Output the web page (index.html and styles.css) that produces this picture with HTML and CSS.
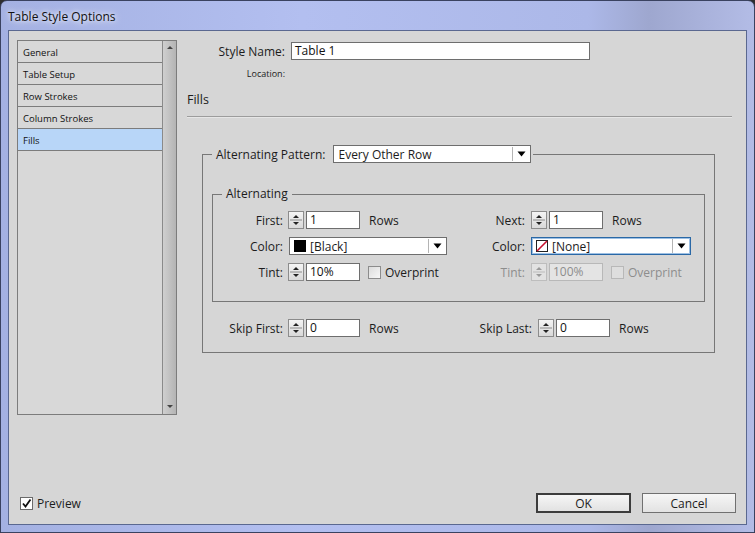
FILE: index.html
```html
<!DOCTYPE html>
<html lang="en">
<head>
    <meta charset="UTF-8">
    <title>Table Style Options</title>
    <link rel="stylesheet" href="styles.css">
</head>
<body>
    <div class="window">
        <div class="titlebar">Table Style Options</div>
        <div class="client">
            <div class="main">
                <div class="sidebar">
                    <ul class="nav">
                        <li>General</li>
                        <li>Table Setup</li>
                        <li>Row Strokes</li>
                        <li>Column Strokes</li>
                        <li class="selected">Fills</li>
                    </ul>
                    <div class="scrollbar">
                        <svg width="12" height="8" viewBox="0 0 12 8"><path d="M3 6 L6 3 L9 6 Z" fill="#444"/></svg>
                        <svg width="12" height="8" viewBox="0 0 12 8"><path d="M3 2 L9 2 L6 5 Z" fill="#444"/></svg>
                    </div>
                </div>

                <div class="content">
                    <div class="name-row">
                        <span class="name-label">Style Name:</span>
                        <div class="field name-input">Table 1</div>
                    </div>
                    <div class="location">Location:</div>
                    <div class="section-title">Fills</div>
                    <div class="rule"></div>

                    <fieldset class="group outer">
                        <legend class="pattern-legend">
                            <span>Alternating Pattern:</span>
                            <div class="select pattern-select">
                                <span class="select-text">Every Other Row</span>
                                <span class="select-arrow"><svg width="9" height="6" viewBox="0 0 9 6"><path d="M0.5 0.5 L8.5 0.5 L4.5 5.5 Z" fill="#000"/></svg></span>
                            </div>
                        </legend>

                        <fieldset class="group inner">
                            <legend class="inner-legend">Alternating</legend>
                            <div class="grid">
                                <span class="lbl">First:</span>
                                <div class="ctl">
                                    <span class="spin"><svg width="14" height="16" viewBox="0 0 14 16"><path d="M4 6 L10 6 L7 3 Z" fill="#222"/><path d="M1 8 L13 8" stroke="#8a8a8a"/><path d="M4 10 L10 10 L7 13 Z" fill="#222"/></svg></span>
                                    <div class="field num">1</div>
                                    <span class="unit">Rows</span>
                                </div>
                                <span class="lbl lbl-right">Next:</span>
                                <div class="ctl">
                                    <span class="spin"><svg width="14" height="16" viewBox="0 0 14 16"><path d="M4 6 L10 6 L7 3 Z" fill="#222"/><path d="M1 8 L13 8" stroke="#8a8a8a"/><path d="M4 10 L10 10 L7 13 Z" fill="#222"/></svg></span>
                                    <div class="field num">1</div>
                                    <span class="unit">Rows</span>
                                </div>

                                <span class="lbl">Color:</span>
                                <div class="ctl">
                                    <div class="select color-select">
                                        <span class="select-text"><span class="swatch black"></span>[Black]</span>
                                        <span class="select-arrow"><svg width="9" height="6" viewBox="0 0 9 6"><path d="M0.5 0.5 L8.5 0.5 L4.5 5.5 Z" fill="#000"/></svg></span>
                                    </div>
                                </div>
                                <span class="lbl lbl-right">Color:</span>
                                <div class="ctl">
                                    <div class="select color-select focused">
                                        <span class="select-text"><svg class="swatch-none" width="12" height="12" viewBox="0 0 12 12"><rect x="0.5" y="0.5" width="11" height="11" fill="#fff" stroke="#222"/><path d="M1 11 L11 1" stroke="#c8102e" stroke-width="1.6"/></svg>[None]</span>
                                        <span class="select-arrow"><svg width="9" height="6" viewBox="0 0 9 6"><path d="M0.5 0.5 L8.5 0.5 L4.5 5.5 Z" fill="#000"/></svg></span>
                                    </div>
                                </div>

                                <span class="lbl">Tint:</span>
                                <div class="ctl">
                                    <span class="spin"><svg width="14" height="16" viewBox="0 0 14 16"><path d="M4 6 L10 6 L7 3 Z" fill="#222"/><path d="M1 8 L13 8" stroke="#8a8a8a"/><path d="M4 10 L10 10 L7 13 Z" fill="#222"/></svg></span>
                                    <div class="field num">10%</div>
                                    <span class="check"></span>
                                    <span class="check-label">Overprint</span>
                                </div>
                                <span class="lbl lbl-right disabled">Tint:</span>
                                <div class="ctl disabled">
                                    <span class="spin"><svg width="14" height="16" viewBox="0 0 14 16"><path d="M4 6 L10 6 L7 3 Z" fill="#9a9a9a"/><path d="M1 8 L13 8" stroke="#bcbcbc"/><path d="M4 10 L10 10 L7 13 Z" fill="#9a9a9a"/></svg></span>
                                    <div class="field num">100%</div>
                                    <span class="check"></span>
                                    <span class="check-label">Overprint</span>
                                </div>
                            </div>
                        </fieldset>

                        <div class="grid skip">
                            <span class="lbl">Skip First:</span>
                            <div class="ctl">
                                <span class="spin"><svg width="14" height="16" viewBox="0 0 14 16"><path d="M4 6 L10 6 L7 3 Z" fill="#222"/><path d="M1 8 L13 8" stroke="#8a8a8a"/><path d="M4 10 L10 10 L7 13 Z" fill="#222"/></svg></span>
                                <div class="field num">0</div>
                                <span class="unit">Rows</span>
                            </div>
                            <span class="lbl lbl-right">Skip Last:</span>
                            <div class="ctl">
                                <span class="spin"><svg width="14" height="16" viewBox="0 0 14 16"><path d="M4 6 L10 6 L7 3 Z" fill="#222"/><path d="M1 8 L13 8" stroke="#8a8a8a"/><path d="M4 10 L10 10 L7 13 Z" fill="#222"/></svg></span>
                                <div class="field num">0</div>
                                <span class="unit">Rows</span>
                            </div>
                        </div>
                    </fieldset>
                </div>
            </div>

            <div class="footer">
                <span class="check checked"><svg width="11" height="11" viewBox="0 0 11 11"><path d="M2 5.5 L4.5 8.5 L9.5 1.5" fill="none" stroke="#111" stroke-width="1.8"/></svg></span>
                <span class="preview-label">Preview</span>
                <div class="buttons">
                    <span class="btn default">OK</span>
                    <span class="btn">Cancel</span>
                </div>
            </div>
        </div>
    </div>
</body>
</html>
```

FILE: styles.css
```css
* {
    box-sizing: border-box;
}

body {
    margin: 0;
    background: #2e2e2e;
    font-family: "Open Sans", sans-serif;
    font-size: 12px;
    color: #1c1c1c;
}

.window {
    width: 755px;
    height: 533px;
    border: 1px solid #3a4260;
    border-radius: 7px 7px 0 0;
    background: linear-gradient(90deg, #a4b1e2 0%, #b3bff0 40%, #acb8e8 78%, #9ea7cf 86%, #b3bce6 100%);
    padding: 0 7px 7px 7px;
    display: flex;
    flex-direction: column;
}

.titlebar {
    height: 29px;
    line-height: 31px;
    font-size: 12px;
    color: #111;
    text-shadow: 0 0 8px #fff, 0 0 4px rgba(255,255,255,0.8);
}

.client {
    flex: 1;
    background: #d6d6d6;
    border: 1px solid #5a6890;
    display: flex;
    flex-direction: column;
}

.main {
    display: flex;
    padding: 9px 0 0 8px;
}

/* left page list */
.sidebar {
    display: flex;
    width: 160px;
    height: 375px;
    border: 1px solid #7c7c7c;
}

.nav {
    list-style: none;
    margin: 0;
    padding: 0;
    flex: 1;
    background: #d8d8d8;
}

.nav li {
    height: 22px;
    line-height: 23px;
    padding-left: 5px;
    font-size: 9.5px;
    color: #111;
    border-bottom: 1px solid #7c7c7c;
}

.nav li.selected {
    background: #b8d6f8;
}

.scrollbar {
    width: 14px;
    border-left: 1px solid #8a8a8a;
    background: linear-gradient(90deg, #cfcfcf, #b4b4b4);
    display: flex;
    flex-direction: column;
    justify-content: space-between;
    align-items: center;
    padding: 2px 0 3px 0;
}

/* right side */
.content {
    margin-left: 10px;
    width: 545px;
}

.name-row {
    display: flex;
    align-items: center;
    margin-top: 2px;
    height: 18px;
}

.name-label {
    width: 98px;
    text-align: right;
    margin-right: 6px;
}

.field {
    height: 18px;
    background: #fff;
    border: 1px solid #6e6e6e;
    padding-left: 3px;
    line-height: 16px;
    font-size: 12px;
    color: #111;
}

.name-input {
    width: 299px;
}

.location {
    width: 98px;
    text-align: right;
    margin-top: 8px;
    line-height: 12px;
    font-size: 9px;
}

.section-title {
    margin-top: 12px;
    line-height: 16px;
    font-size: 12.5px;
}

.rule {
    margin-top: 8px;
    border-top: 1px solid #9c9c9c;
    border-bottom: 1px solid #e6e6e6;
}

.group {
    margin: 0;
    border: 1px solid #777;
    min-width: 0;
}

.outer {
    margin: 27px 0 0 15px;
    width: 513px;
    padding: 0 9px 15px 9px;
}

.pattern-legend {
    display: flex;
    align-items: center;
    padding: 0 2px 0 4px;
}

.select {
    display: flex;
    height: 18px;
    background: #fff;
    border: 1px solid #6e6e6e;
}

.select-text {
    flex: 1;
    display: flex;
    align-items: center;
    padding-left: 4px;
}

.select-arrow {
    width: 18px;
    border-left: 1px solid #b4b4b4;
    margin: 1px 0;
    display: flex;
    align-items: center;
    justify-content: center;
}

.pattern-select {
    width: 198px;
    margin-left: 8px;
}

.inner {
    margin-top: 23px;
    padding: 9px 9px 20px 9px;
}

.inner-legend {
    padding: 0 4px;
    line-height: 16px;
}

.grid {
    display: grid;
    grid-template-columns: 66px 171px 72px 1fr;
    grid-auto-rows: 18px;
    row-gap: 8px;
    align-items: center;
}

.lbl {
    text-align: right;
    padding-right: 5px;
}

.lbl-right {
    padding-right: 6px;
}

.ctl {
    display: flex;
    align-items: center;
}

.spin {
    width: 16px;
    height: 18px;
    border: 1px solid #8c8c8c;
    background: linear-gradient(#f4f4f4, #d9d9d9);
    display: flex;
}

.num {
    width: 54px;
    margin-left: 2px;
}

.unit {
    margin-left: 9px;
}

.check {
    width: 13px;
    height: 13px;
    border: 1px solid #8c8c8c;
    background: linear-gradient(135deg, #dcdcdc, #f7f7f7);
    margin-left: 8px;
    display: flex;
    align-items: center;
    justify-content: center;
}

.check-label {
    margin-left: 4px;
}

.swatch {
    width: 12px;
    height: 12px;
    margin-right: 4px;
}

.swatch.black {
    background: #000;
}

.swatch-none {
    margin-right: 4px;
}

.color-select {
    width: 158px;
    margin-left: 1px;
}

.color-select.focused {
    width: 160px;
    margin-left: 0;
    border-color: #2a68a6;
    box-shadow: inset 0 0 0 1px #9dc0e4;
}

.disabled,
.disabled .check-label {
    color: #8d8d8d;
}

.disabled .spin {
    border-color: #bdbdbd;
    background: #e2e2e2;
}

.disabled .field {
    background: #e4e4e4;
    border-color: #b8b8b8;
    color: #8d8d8d;
}

.disabled .check {
    border-color: #b8b8b8;
    background: #dedede;
}

.skip {
    margin-top: 17px;
    grid-template-columns: 76px 178px 72px 1fr;
}

/* bottom bar */
.footer {
    margin-top: auto;
    display: flex;
    align-items: center;
    padding: 0 10px 11px 11px;
}

.footer .check {
    margin-left: 0;
    background: #fff;
    border-color: #6a6a6a;
}

.preview-label {
    margin-left: 4px;
}

.buttons {
    margin-left: auto;
    display: flex;
}

.btn {
    width: 94px;
    height: 20px;
    border: 1px solid #707070;
    background: linear-gradient(#f6f6f6, #e2e2e2);
    display: flex;
    align-items: center;
    justify-content: center;
    margin-left: 11px;
}

.btn.default {
    width: 95px;
    border: 2px solid #3c3c3c;
}
```
